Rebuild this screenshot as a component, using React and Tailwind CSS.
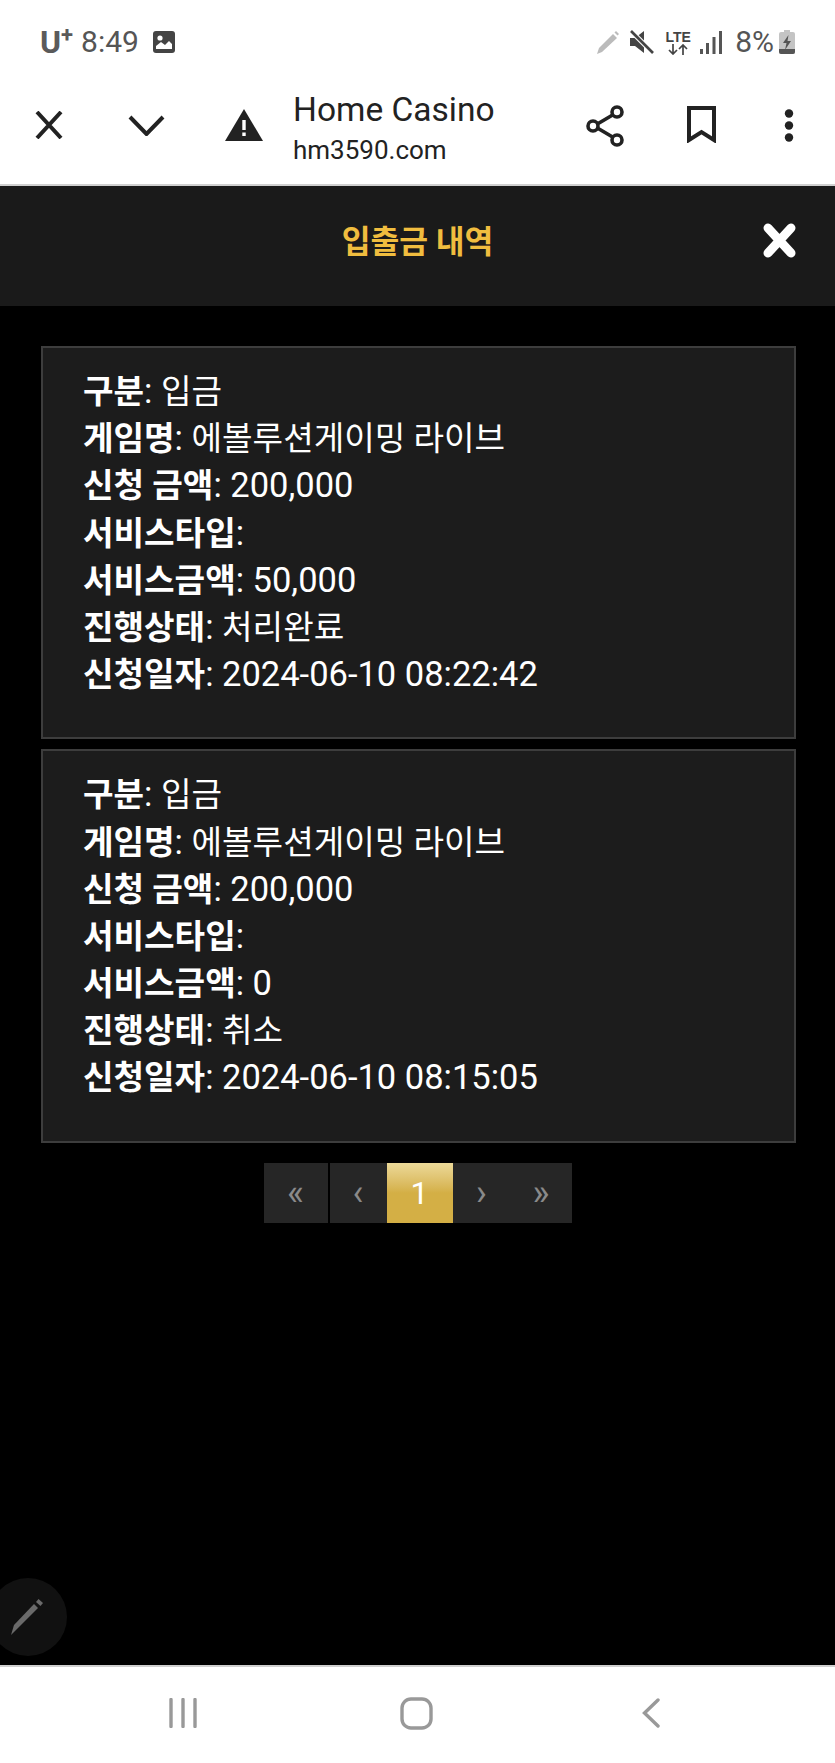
import { useState } from "react";

const font = { fontFamily: '"Roboto", "Noto Sans CJK KR", sans-serif' };

const records = [
    [
        ["구분", "입금"],
        ["게임명", "에볼루션게이밍 라이브"],
        ["신청 금액", "200,000", true],
        ["서비스타입", ""],
        ["서비스금액", "50,000", true],
        ["진행상태", "처리완료"],
        ["신청일자", "2024-06-10 08:22:42", true],
    ],
    [
        ["구분", "입금"],
        ["게임명", "에볼루션게이밍 라이브"],
        ["신청 금액", "200,000", true],
        ["서비스타입", ""],
        ["서비스금액", "0", true],
        ["진행상태", "취소"],
        ["신청일자", "2024-06-10 08:15:05", true],
    ],
];

const StatusBar = () => (
    <div className="h-[75px] flex items-center justify-between pl-[40px] pr-[40px] pt-[9px] text-[#555]">
        <div className="flex items-center">
            <span className="text-[32px] font-bold leading-none text-[#5a5a5a]">U</span>
            <span className="text-[22px] font-bold leading-none mb-[14px] text-[#5a5a5a]">+</span>
            <span className="text-[30px] leading-none ml-[8px] mr-[14px]">8:49</span>
            <svg width="22" height="22" viewBox="0 0 22 22">
                <rect width="22" height="22" rx="3" fill="#444" />
                <circle cx="7" cy="7" r="2.6" fill="#fff" />
                <path d="M3 18v-3l5-4 4 3 4-4 3 3v5z" fill="#fff" />
            </svg>
        </div>
        <div className="flex items-center">
            <svg width="25" height="25" viewBox="0 0 25 25" className="mr-[10px]">
                <path d="M2 24l2-6L18 4l4 4L7 22z" fill="#bbb" />
                <path d="M19.5 2.5l1.5-1.5 3 3-1.5 1.5z" fill="#bbb" />
            </svg>
            <svg width="24" height="24" viewBox="0 0 24 24" className="mr-[11px]">
                <path d="M0 8h5l9-7v22l-9-7H0z" fill="#444" />
                <path d="M1 1l22 22" stroke="#fff" strokeWidth="5" />
                <path d="M1 1l22 22" stroke="#444" strokeWidth="2.6" />
            </svg>
            <div className="w-[26px] mr-[9px] flex flex-col items-center text-[#444]">
                <span className="text-[14px] font-bold leading-[14px] [font-family:'Liberation_Sans']">LTE</span>
                <svg width="24" height="11" viewBox="0 0 24 11">
                    <path d="M7 0v10M3 6l4 4 4-4M17 11V1M13 5l4-4 4 4" fill="none" stroke="#444" strokeWidth="1.7" />
                </svg>
            </div>
            <svg width="22" height="23" viewBox="0 0 22 23" className="mr-[13px]">
                <path d="M0 18h3v5H0zM6 12h3v11H6z M12.500 6h3v17h-3z M19 0h3v23h-3z" fill="#555" />
            </svg>
            <span className="text-[30px] leading-none mr-[5px]">8%</span>
            <svg width="16" height="24" viewBox="0 0 16 24">
                <path d="M5 0h6v2h3a2 2 0 0 1 2 2v18a2 2 0 0 1-2 2H2a2 2 0 0 1-2-2V4a2 2 0 0 1 2-2h3z" fill="#c4c4c4" />
                <path d="M0 19h16v3a2 2 0 0 1-2 2H2a2 2 0 0 1-2-2z" fill="#555" />
                <path d="M9.500 5L4 13h3.500L6 20l6-9H8.500z" fill="#555" />
            </svg>
        </div>
    </div>
);

const BrowserBar = () => (
    <div className="h-[111px] border-b-2 border-[#d0d0d0] flex items-center pb-[8px] text-[#222]">
        <svg width="28" height="28" viewBox="0 0 28 28" className="ml-[35px] mb-[1px]">
            <path d="M2 1l24 26M26 1L2 27" stroke="#222" strokeWidth="4" fill="none" />
        </svg>
        <svg width="37" height="21" viewBox="0 0 37 21" className="ml-[65px] mb-[1px]">
            <path d="M2 2l16.500 17L35 2" stroke="#222" strokeWidth="4" fill="none" />
        </svg>
        <svg width="38" height="32" viewBox="0 0 38 32" className="ml-[60px] mb-[1px]">
            <path d="M19 0l19 32H0z" fill="#222" />
            <path d="M17.300 11h3.400v10h-3.400zM17.300 23.500h3.400V27h-3.400z" fill="#fff" />
        </svg>
        <div className="ml-[30px] w-[250px] flex flex-col mt-[6px]">
            <span className="text-[33.500px] leading-[44px]">Home Casino</span>
            <span className="text-[26px] leading-[37px]">hm3590.com</span>
        </div>
        <svg width="38" height="42" viewBox="0 0 38 42" className="ml-[43px]">
            <path d="M30 8L8 21l22 13" stroke="#222" strokeWidth="3.6" fill="none" />
            <circle cx="31" cy="7" r="5" fill="#fff" stroke="#222" strokeWidth="3.6" />
            <circle cx="7" cy="21" r="5" fill="#fff" stroke="#222" strokeWidth="3.6" />
            <circle cx="31" cy="35" r="5" fill="#fff" stroke="#222" strokeWidth="3.6" />
        </svg>
        <svg width="29" height="37" viewBox="0 0 29 37" className="ml-[63px] mb-[2px]">
            <path d="M2 2h25v32l-12.500-8L2 34z" stroke="#222" strokeWidth="4" fill="none" />
        </svg>
        <svg width="10" height="33" viewBox="0 0 10 33" className="ml-[68px]">
            <circle cx="5" cy="4.500" r="4.200" fill="#222" />
            <circle cx="5" cy="16.500" r="4.200" fill="#222" />
            <circle cx="5" cy="28.500" r="4.200" fill="#222" />
        </svg>
    </div>
);

const Header = () => (
    <div className="h-[120px] bg-[#1a1a1a] flex items-center justify-between pl-[38px] pr-[38px]">
        <div className="w-[35px]" />
        <h1 className="text-[31.300px] font-bold text-[#f0bd3f] leading-none mb-[6px]">입출금 내역</h1>
        <svg width="35" height="35" viewBox="0 0 35 35" className="mb-[11px]">
            <path d="M6 5l23 25M29 5L6 30" stroke="#fff" strokeWidth="9" strokeLinecap="round" fill="none" />
        </svg>
    </div>
);

const RecordCard = ({ rows }) => (
    <div className="border-2 border-[#3d3d3d] bg-[#1c1c1c] pl-[40px] pt-[20px] pb-[39px] text-[33.200px] leading-[47.200px] text-white">
        {rows.map(([label, value, numeric]) => (
            <div key={label} className="h-[47.200px] whitespace-nowrap">
                <span className="font-bold">{label}</span>
                <span className="text-[34.500px]">: </span>
                <span className={numeric ? "text-[34.500px]" : ""}>{value}</span>
            </div>
        ))}
    </div>
);

const pageBtn = "h-full flex items-center justify-center pt-[1px] text-[36px] text-[#8a8a8a] bg-[#262626]";

const Pagination = () => (
    <div className="flex justify-center mt-[20px] h-[60px] pr-[2px]">
        <div className="flex h-full">
            <span className={`${pageBtn} w-[64px] mr-[2px]`}>«</span>
            <span className={`${pageBtn} w-[57px]`}>‹</span>
            <span className="h-full w-[66px] flex items-center justify-center text-[32px] text-white bg-gradient-to-b from-[#ecd998] to-[#d4af45] to-50%">1</span>
            <span className={`${pageBtn} w-[58px]`}>›</span>
            <span className={`${pageBtn} w-[61px]`}>»</span>
        </div>
    </div>
);

const NavBar = () => (
    <div className="h-[98px] bg-white border-t-2 border-[#cfcfcf] flex items-center pb-[4px]">
        <svg width="28" height="30" viewBox="0 0 28 30" className="ml-[169px]">
            <path d="M2 1.500v27M14 1.500v27M26 1.500v27" stroke="#999" strokeWidth="3.400" strokeLinecap="round" />
        </svg>
        <svg width="33" height="33" viewBox="0 0 33 33" className="ml-[203px]">
            <rect x="2" y="2" width="29" height="29" rx="9" fill="none" stroke="#999" strokeWidth="3.400" />
        </svg>
        <svg width="18" height="30" viewBox="0 0 18 30" className="ml-[209px]">
            <path d="M16 2L2.500 15 16 28" fill="none" stroke="#999" strokeWidth="3.400" strokeLinecap="round" />
        </svg>
    </div>
);

export default function App() {
    const [pageRecords] = useState(records);

    return (
        <div style={font} className="relative w-[835px] h-[1763px] flex flex-col bg-white overflow-hidden">
            <StatusBar />
            <BrowserBar />
            <Header />

            {/* List */}
            <div className="flex-1 bg-black px-[41px] pt-[40px] pr-[39px]">
                <div className="flex flex-col gap-[10px]">
                    {pageRecords.map((rows, i) => (
                        <RecordCard key={i} rows={rows} />
                    ))}
                </div>
                <Pagination />
            </div>

            {/* Floating pen button */}
            <div className="absolute left-[-11px] top-[1578px] w-[78px] h-[78px] rounded-full bg-[#111] flex items-center justify-center">
                <svg width="36" height="38" viewBox="0 0 36 38">
                    <path d="M1 37l3-10L24 6l4 4L7 31z" fill="#6a6a6a" />
                    <path d="M26 4l2.500-3 4.500 4-2.500 3z" fill="#6a6a6a" />
                </svg>
            </div>

            <NavBar />
        </div>
    );
}
